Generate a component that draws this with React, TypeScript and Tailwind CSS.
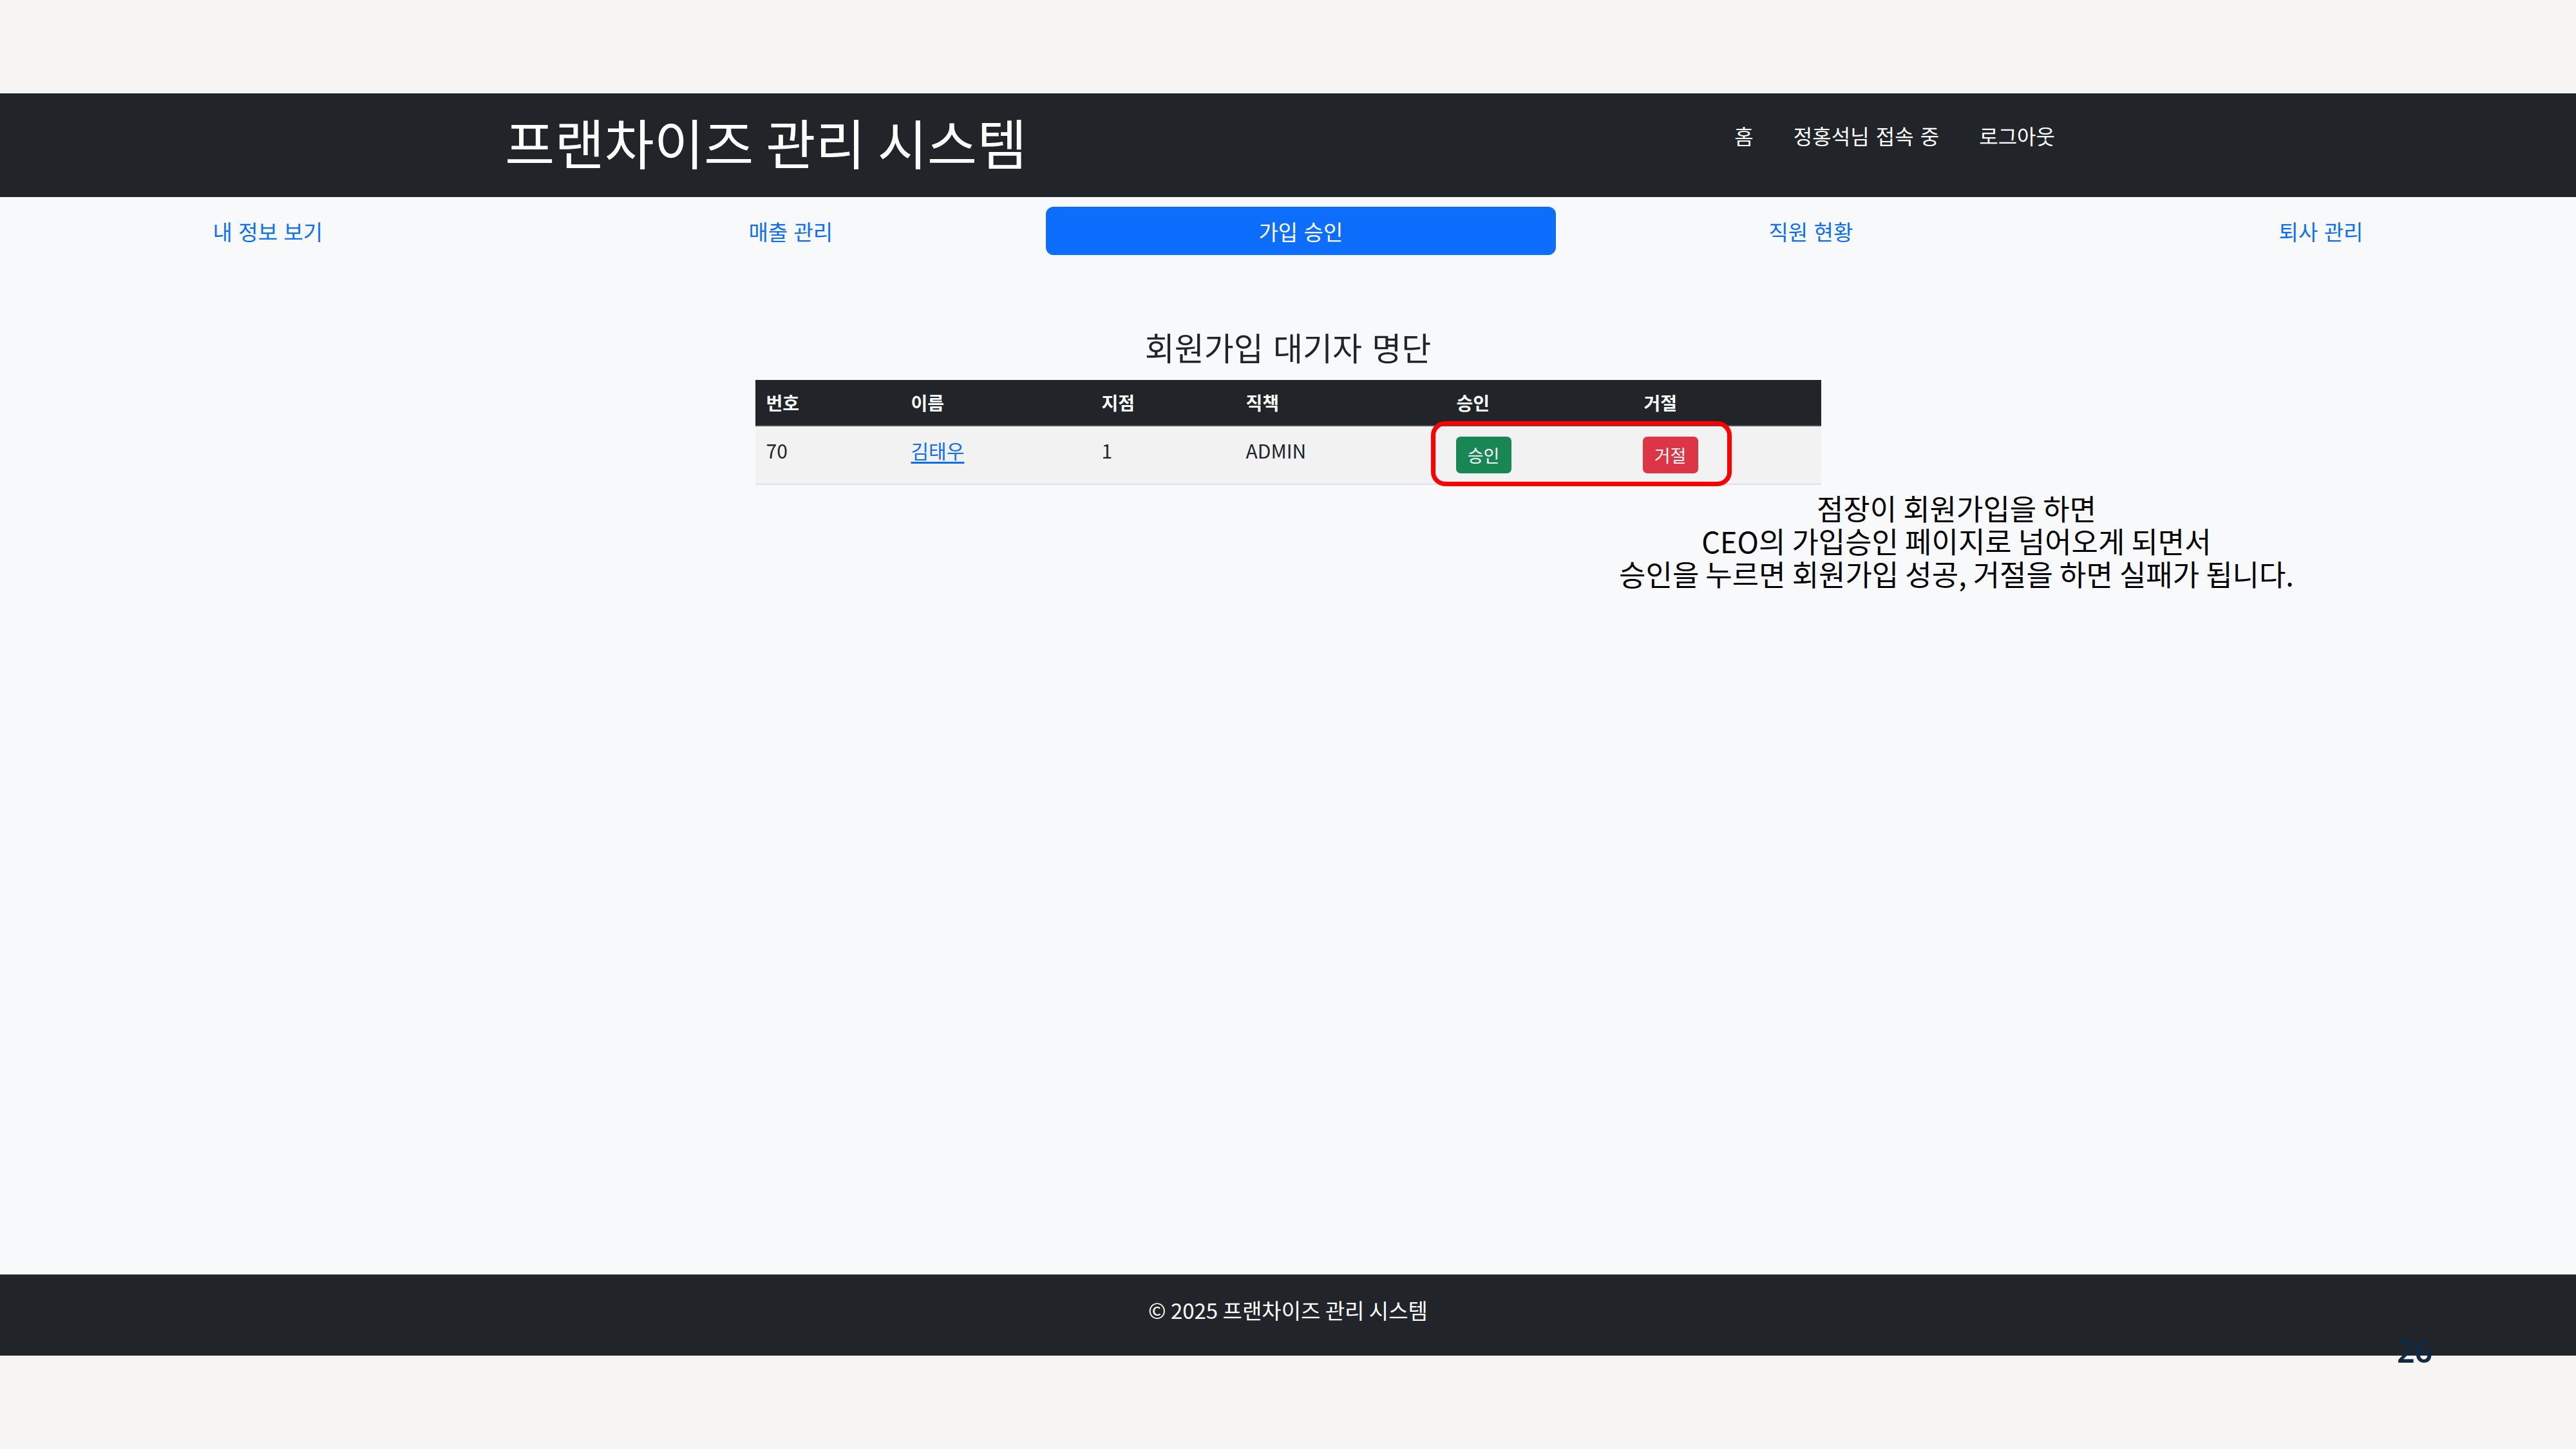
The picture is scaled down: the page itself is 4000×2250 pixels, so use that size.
import React from 'react';

const navItems = ['내 정보 보기', '매출 관리', '가입 승인', '직원 현황', '퇴사 관리'];

const columns = [
  { label: '번호', width: 'w-[225px]' },
  { label: '이름', width: 'w-[296px]' },
  { label: '지점', width: 'w-[224px]' },
  { label: '직책', width: 'w-[327px]' },
  { label: '승인', width: 'w-[291px]' },
  { label: '거절', width: 'w-[292px]' },
];

const App = () => {
  return (
    <div className="relative w-[4000px] h-[2250px] bg-[#f6f5f3] flex flex-col font-['Noto_Sans_CJK_KR','Noto_Sans',sans-serif] text-[#212529]">
      <div className="h-[145px]"></div>

      {/* captured page */}
      <div className="h-[1960px] flex flex-col bg-[#f8f9fa]">
        <header className="h-[161px] bg-[#212529]">
          <div className="w-[2432px] mx-auto flex items-start justify-between">
            <h1 className="pt-[24px] text-[84px] leading-[101px] text-white font-normal">프랜차이즈 관리 시스템</h1>
            <nav className="pt-[41px] pr-[25px] flex gap-[62px] text-[32px] leading-[48px] text-white [word-spacing:3px]">
              <a href="#home">홈</a>
              <span>정홍석님 접속 중</span>
              <a href="#logout">로그아웃</a>
            </nav>
          </div>
        </header>

        <nav className="flex w-full pt-[15px]">
          {navItems.map((item, i) => (
            <a
              key={item}
              href="#"
              className={
                i === 2
                  ? 'flex-auto h-[75px] px-4 flex items-center justify-center rounded-[12px] bg-[#0d6efd] text-white text-[33px] leading-[48px] [word-spacing:2px]'
                  : 'flex-auto h-[75px] px-4 flex items-center justify-center text-[#0d6efd] text-[33px] leading-[48px] [word-spacing:2px]'
              }
            >
              {item}
            </a>
          ))}
        </nav>

        <main className="flex-1 flex flex-col items-center pt-[112px]">
          <h2 className="text-[50px] leading-[60px] font-normal mb-[22px] [word-spacing:4px]">회원가입 대기자 명단</h2>
          <table className="w-[1655px] table-fixed border-collapse text-[28px] leading-[42px]">
            <colgroup>
              {columns.map((c) => (
                <col key={c.label} className={c.width} />
              ))}
            </colgroup>
            <thead>
              <tr className="bg-[#212529] text-white border-b-2 border-[#4d5154]">
                {columns.map((c) => (
                  <th key={c.label} className="text-left font-bold py-[14px] pl-[17px]">
                    {c.label}
                  </th>
                ))}
              </tr>
            </thead>
            <tbody className="text-[30px]">
              <tr className="bg-[#f2f2f2] border-b-2 border-[#dee2e6] align-top">
                <td className="py-[16px] pl-[17px]">70</td>
                <td className="py-[16px] pl-[17px]">
                  <a href="#" className="text-[#0d6efd] underline underline-offset-[5px]">김태우</a>
                </td>
                <td className="py-[16px] pl-[17px]">1</td>
                <td className="py-[16px] pl-[17px]">ADMIN</td>
                <td className="py-[16px] pl-[16px]">
                  <button className="h-[57px] w-[86px] rounded-[7px] bg-[#198754] text-white text-[27px]">승인</button>
                </td>
                <td className="py-[16px] pl-[15px]">
                  <button className="h-[57px] w-[86px] rounded-[7px] bg-[#dc3545] text-white text-[27px]">거절</button>
                </td>
              </tr>
            </tbody>
          </table>
        </main>

        <footer className="h-[126px] pb-[14px] bg-[#212529] flex items-center justify-center text-white text-[33px]">
          © 2025 프랜차이즈 관리 시스템
        </footer>
      </div>

      <div className="flex-1"></div>

      {/* slide overlays */}
      <div className="absolute left-[2222px] top-[654px] w-[467px] h-[101px] border-[7px] border-[#ff0000] rounded-[22px]"></div>
      <div className="absolute left-[2388px] top-[763px] w-[1300px] text-center text-black text-[45px] leading-[51px]">
        <p>점장이 회원가입을 하면</p>
        <p>CEO의 가입승인 페이지로 넘어오게 되면서</p>
        <p>승인을 누르면 회원가입 성공, 거절을 하면 실패가 됩니다.</p>
      </div>
      <div className="absolute left-[3722px] top-[2074px] z-10 text-[48px] leading-none font-semibold text-[#0f2a44] font-['Noto_Sans',sans-serif]">
        26
      </div>
    </div>
  );
};

export default App;
